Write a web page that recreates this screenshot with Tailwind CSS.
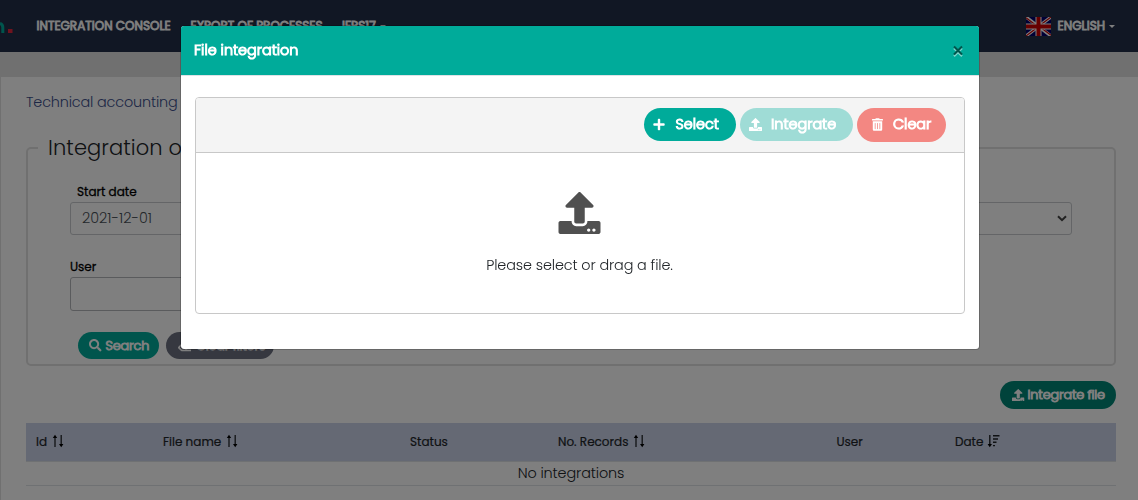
<!DOCTYPE html>
<html lang="en">
<head>
<meta charset="utf-8">
<title>Integration console</title>
<script src="https://cdn.jsdelivr.net/npm/@tailwindcss/browser@4"></script>
</head>
<body class="h-[500px] w-[1138px] overflow-hidden bg-[#e0e0e0] font-[Poppins,Inter,sans-serif] text-[#212529]">
<svg class="hidden">
  <symbol id="upload" viewBox="0 0 512 512"><path d="M296 384h-80c-13.3 0-24-10.7-24-24V192h-87.7c-17.8 0-26.7-21.5-14.1-34.1L242.3 5.7c7.5-7.5 19.8-7.5 27.3 0l152.2 152.2c12.6 12.6 3.7 34.1-14.1 34.1H320v168c0 13.3-10.7 24-24 24zm216-8v112c0 13.3-10.7 24-24 24H24c-13.3 0-24-10.7-24-24V376c0-13.3 10.7-24 24-24h136v8c0 30.9 25.1 56 56 56h80c30.9 0 56-25.1 56-56v-8h136c13.3 0 24 10.7 24 24zm-124 88c0-11-9-20-20-20s-20 9-20 20 9 20 20 20 20-9 20-20zm64 0c0-11-9-20-20-20s-20 9-20 20 9 20 20 20 20-9 20-20z"/></symbol>
  <symbol id="sort" viewBox="0 0 12 14"><path d="M3 13V2.5M9.200 1v10.500" fill="none" stroke="currentColor" stroke-width="1.300"/><path d="M3 .8L5.200 4H.8zM9.200 13.200L7 10h4.400z"/></symbol>
</svg>

<header class="flex h-[52px] items-center bg-[#222f49] text-[12px] font-normal text-white [-webkit-text-stroke:0.8px]">
  <div class="flex h-[52px] w-[36.500px] shrink-0 items-start">
    <svg class="mt-[22px] h-[12px] w-[13px]" viewBox="0 0 13 12"><path d="M0 1.500c2 .6 2.800 2 2.800 4V11" fill="none" stroke="#00ab9a" stroke-width="3"/><path d="M8 7h4.500v4H8z" fill="#e0263c"/></svg>
  </div>
  <nav class="flex items-center whitespace-nowrap">
    <a class="w-[154px]">INTEGRATION CONSOLE</a>
    <a class="w-[151.500px]">EXPORT OF PROCESSES</a>
    <a class="flex items-center gap-[4px]">IFRS17 <span class="border-x-[3px] border-t-[3px] border-x-transparent border-t-white"></span></a>
  </nav>
  <div class="mr-[23px] ml-auto flex items-center">
    <svg class="mt-[1px] mr-[7px] h-[19px] w-[25px]" viewBox="0 0 25 19">
      <path fill="#00006b" d="M0 0h25v19H0z"/>
      <path stroke="#fff" stroke-width="3.200" d="M0 0l25 19M25 0L0 19"/>
      <path stroke="#c00" stroke-width="1.100" d="M0 .7l12 9M25 0L13 9M0 19l12-9M25 18.300l-12-9"/>
      <path stroke="#fff" stroke-width="6" d="M12.500 0v19M0 9.500h25"/>
      <path stroke="#c00" stroke-width="4" d="M12.500 0v19M0 9.500h25"/>
    </svg>
    <span>ENGLISH</span>
    <span class="ml-[4px] border-x-[3px] border-t-[3px] border-x-transparent border-t-white"></span>
  </div>
</header>

<main class="mt-[25px] h-[423px] border-l border-[#e0e0e0] bg-white pr-[22px] pl-[25px]">
  <div class="h-[55px] pt-[14px] text-[14.400px] leading-[22px] font-light tracking-[-0.150px] text-[#3c4f8c]">Technical accounting</div>
  <fieldset class="h-[234px] rounded-[5px] border-2 border-[#e0e0e0] pl-[10px]">
    <legend class="h-[32px] px-[10px] text-[21px] leading-[32px] font-light tracking-[0.100px]">Integration of files</legend>
    <div class="pr-[32px] pl-[32px]">
      <div class="mt-[18px] mb-[1px] flex h-[19px] items-center pl-[7px] text-[12px] font-normal text-black [-webkit-text-stroke:0.3px]">Start date</div>
      <div class="flex justify-between">
        <div class="flex h-[33px] w-[320px] items-center rounded-[3px] border border-[#c8cbce] pl-[11px] text-[14.400px] font-light text-[#495057]">2021-12-01</div>
        <div class="mr-[10px] flex h-[33px] w-[320px] items-center justify-end rounded-[3px] border border-[#c8cbce] pr-[4px]">
          <svg class="h-[7px] w-[10px]" viewBox="0 0 10 7"><path d="M1 1.200l4 4 4-4" fill="none" stroke="#444" stroke-width="2"/></svg>
        </div>
      </div>
      <div class="mt-[22px] mb-[1px] flex h-[19px] items-center text-[12px] font-normal text-black [-webkit-text-stroke:0.3px]">User</div>
      <div class="h-[34px] w-[320px] rounded-[3px] border border-[#b4b7ba]"></div>
      <div class="mt-[21px] flex gap-[7px] pl-[8px] text-[12.800px] font-light tracking-[-0.150px] text-white [-webkit-text-stroke:1px]">
        <div class="flex h-[27px] w-[81px] items-center rounded-full bg-[#00ab9a] pl-[11px]">
          <svg class="mr-[4px] size-[12.500px] fill-white" viewBox="0 0 512 512"><path d="M505 442.700L405.300 343c-4.500-4.500-10.600-7-17-7H372c27.600-35.300 44-79.700 44-128C416 93.100 322.900 0 208 0S0 93.100 0 208s93.100 208 208 208c48.300 0 92.700-16.400 128-44v16.300c0 6.400 2.500 12.500 7 17l99.700 99.700c9.400 9.400 24.600 9.400 33.900 0l28.300-28.300c9.400-9.400 9.400-24.600.1-34zM208 336c-70.700 0-128-57.200-128-128 0-70.700 57.200-128 128-128 70.700 0 128 57.200 128 128 0 70.700-57.200 128-128 128z"/></svg>Search
        </div>
        <div class="flex h-[27px] w-[108px] items-center rounded-full bg-[#6c7080] pl-[12px]">
          <svg class="mr-[5px] size-[13px] fill-white" viewBox="0 0 512 512"><path d="M497.941 273.941c18.745-18.745 18.745-49.137 0-67.882l-160-160c-18.745-18.745-49.136-18.746-67.883 0l-256 256c-18.745 18.745-18.745 49.137 0 67.882l96 96A48.004 48.004 0 0 0 144 480h356c6.627 0 12-5.373 12-12v-40c0-6.627-5.373-12-12-12H355.883l142.058-142.059zm-302.627-62.627l137.373 137.373L265.373 416H150.628l-80-80 124.686-124.686z"/></svg>Clear filters
        </div>
      </div>
    </div>
  </fieldset>
  <div class="mt-[15px] flex justify-end">
    <div class="flex h-[28px] w-[116px] items-center rounded-full bg-[#008676] pl-[12px] text-[12.800px] font-light tracking-[-0.150px] whitespace-nowrap text-white [-webkit-text-stroke:1px]">
      <svg class="mr-[3px] size-[12.500px] fill-white"><use href="#upload"/></svg>Integrate file
    </div>
  </div>
  <div class="mt-[14px] grid h-[39px] grid-cols-[127px_247px_148px_278.500px_118.500px_1fr] items-center border-b border-[#dee2e6] bg-[#cad2e8] pl-[10px] text-[12px] font-normal [-webkit-text-stroke:0.2px]">
    <div class="flex items-center gap-[5px]">Id <svg class="mb-[2px] h-[14px] w-[12px]"><use href="#sort"/></svg></div>
    <div class="flex items-center gap-[5px]">File name <svg class="mb-[2px] h-[14px] w-[12px]"><use href="#sort"/></svg></div>
    <div>Status</div>
    <div class="flex items-center gap-[5px]">No. Records <svg class="mb-[2px] h-[14px] w-[12px]"><use href="#sort"/></svg></div>
    <div>User</div>
    <div class="flex items-center gap-[4px]">Date
      <svg class="mb-[2px] h-[14px] w-[13px]" viewBox="0 0 13 14"><path d="M2.800 1v10M6 1.700h6.500M6 5h5M6 8.300h3.500M6 11.600h2" fill="none" stroke="currentColor" stroke-width="1.400"/><path d="M2.800 13.200L.6 10H5z"/></svg>
    </div>
  </div>
  <div class="flex h-[24px] items-center justify-center border-b border-[#dee2e6] text-[14.400px] font-light tracking-[-0.120px]">No integrations</div>
</main>

<div class="fixed inset-0 flex items-start bg-black/50">
  <div class="mt-[25px] ml-[180px] w-[800px] overflow-hidden rounded-[4px] border border-black/20 bg-white bg-clip-padding">
    <div class="flex h-[49px] items-center bg-[#00ab9a] pr-[15px] pl-[13px]">
      <h2 class="text-[14.400px] font-light text-white [-webkit-text-stroke:1px]">File integration</h2>
      <svg class="ml-auto size-[12px]" viewBox="0 0 12 12"><path d="M2 3.200l8 8M10 3.200l-8 8" stroke="#7fd5cc" stroke-width="2"/><path d="M2 1.500l8 8M10 1.500l-8 8" stroke="#00554c" stroke-width="2"/></svg>
    </div>
    <div class="h-[274px] border-t border-[#dee2e6] px-[14px] pt-[21px]">
      <div class="h-[217px] w-[770px] overflow-hidden rounded-[4px] border border-[#c8c8c8]">
        <div class="flex h-[55px] items-start justify-end gap-[4px] border-b border-[#c8c8c8] bg-[#f4f4f4] pt-[10px] pr-[18px] text-[14.400px] font-light text-white [-webkit-text-stroke:1px]">
          <div class="flex h-[33px] w-[92px] items-center rounded-full bg-[#00ab9a] pl-[9px]">
            <svg class="mr-[10.500px] h-[13px] w-[12px] fill-white" viewBox="0 0 448 512"><path d="M416 208H272V64c0-17.670-14.330-32-32-32h-32c-17.670 0-32 14.330-32 32v144H32c-17.670 0-32 14.330-32 32v32c0 17.670 14.330 32 32 32h144v144c0 17.670 14.330 32 32 32h32c17.670 0 32-14.330 32-32V304h144c17.670 0 32-14.330 32-32v-32c0-17.670-14.330-32-32-32z"/></svg>Select
          </div>
          <div class="flex h-[33px] w-[113px] items-center rounded-full bg-[#9fdcd6] pl-[8.500px]">
            <svg class="mr-[9.500px] size-[13px] fill-white"><use href="#upload"/></svg>Integrate
          </div>
          <div class="flex h-[34px] w-[89px] items-center rounded-full bg-[#f38782] pl-[15px]">
            <svg class="mr-[10px] mb-[1px] h-[13px] w-[11px] fill-white" viewBox="0 0 448 512"><path d="M32 464a48 48 0 0 0 48 48h288a48 48 0 0 0 48-48V128H32zm272-256a16 16 0 0 1 32 0v224a16 16 0 0 1-32 0zm-96 0a16 16 0 0 1 32 0v224a16 16 0 0 1-32 0zm-96 0a16 16 0 0 1 32 0v224a16 16 0 0 1-32 0zM432 32H312l-9.400-18.700A24 24 0 0 0 281.100 0H166.800a23.720 23.720 0 0 0-21.400 13.300L136 32H16A16 16 0 0 0 0 48v32a16 16 0 0 0 16 16h416a16 16 0 0 0 16-16V48a16 16 0 0 0-16-16z"/></svg>Clear
          </div>
        </div>
        <div class="flex flex-col items-center pt-[39px]">
          <svg class="mr-[1px] h-[42px] w-[43px] fill-[#505050]"><use href="#upload"/></svg>
          <p class="mt-[20px] mr-[1px] text-[14.400px] leading-[22px] font-light tracking-[-0.110px]">Please select or drag a file.</p>
        </div>
      </div>
    </div>
  </div>
</div>
</body>
</html>
